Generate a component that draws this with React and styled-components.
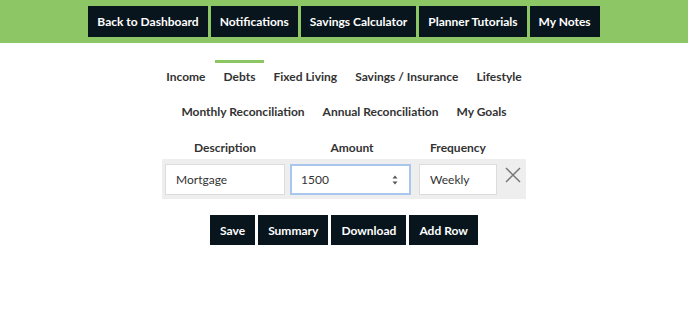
import React from "react";
import styled, { createGlobalStyle } from "styled-components";

const GlobalStyle = createGlobalStyle`
  body {
    margin: 0;
    background: #fff;
    font-family: Lato, "Open Sans", sans-serif;
    color: #333;
  }
`;

const topLinks = ["Back to Dashboard", "Notifications", "Savings Calculator", "Planner Tutorials", "My Notes"];
const tabRows = [
  ["Income", "Debts", "Fixed Living", "Savings / Insurance", "Lifestyle"],
  ["Monthly Reconciliation", "Annual Reconciliation", "My Goals"],
];

const App = () => {
  return (
    <>
      <GlobalStyle />
      <TopBar>
        {topLinks.map((l) => (
          <DarkButton key={l} $h={31} $pad={9}>{l}</DarkButton>
        ))}
      </TopBar>
      <Main>
        <Tabs>
          {tabRows.map((row, i) => (
            <TabRow key={i}>
              {row.map((t) => (
                <Tab key={t} $active={t === "Debts"}>{t}</Tab>
              ))}
            </TabRow>
          ))}
        </Tabs>
        <Table>
          <colgroup>
            <col style={{ width: 126 }} />
            <col style={{ width: 128 }} />
            <col style={{ width: 84 }} />
            <col style={{ width: 26 }} />
          </colgroup>
          <thead>
            <tr>
              <Th>Description</Th>
              <Th>Amount</Th>
              <Th>Frequency</Th>
              <Th />
            </tr>
          </thead>
          <tbody>
            <Row>
              <Td>
                <Field defaultValue="Mortgage" />
              </Td>
              <Td $l={2} $r={5}>
                <NumberBox>
                  <NumberInput defaultValue="1500" />
                  <svg width="8" height="14" viewBox="0 0 8 14">
                    <path d="M1.5 5.5 L4 2.5 L6.5 5.5 Z" fill="#555" />
                    <path d="M1.5 8.5 L4 11.5 L6.5 8.5 Z" fill="#555" />
                  </svg>
                </NumberBox>
              </Td>
              <Td>
                <Field defaultValue="Weekly" />
              </Td>
              <Td $l={0} $r={0}>
                <Remove aria-label="remove row">
                  <svg width="16" height="16" viewBox="0 0 16 16">
                    <path d="M1 1 L15 15 M15 1 L1 15" stroke="#777" strokeWidth="1.5" fill="none" />
                  </svg>
                </Remove>
              </Td>
            </Row>
          </tbody>
        </Table>
        <Actions>
          {["Save", "Summary", "Download", "Add Row"].map((b) => (
            <DarkButton key={b} $h={30} $pad={10}>{b}</DarkButton>
          ))}
        </Actions>
      </Main>
    </>
  );
};

export default App;

const TopBar = styled.div`
  background: #8cc665;
  height: 43px;
  display: flex;
  justify-content: center;
  align-items: flex-start;
  gap: 3px;
  padding-top: 6px;
  box-sizing: border-box;
`;

const DarkButton = styled.button`
  height: ${(p) => p.$h}px;
  padding: 0 ${(p) => p.$pad}px;
  background: #08151d;
  color: #fff;
  border: none;
  font-family: Lato, sans-serif;
  font-weight: 700;
  font-size: 12px;
  cursor: pointer;
  white-space: nowrap;
`;

const Main = styled.div`
  display: flex;
  flex-direction: column;
  align-items: center;
  padding-top: 17px;
`;

const Tabs = styled.div`
  display: flex;
  flex-direction: column;
  align-items: center;
`;

const TabRow = styled.div`
  display: flex;
  height: 35px;
`;

const Tab = styled.div`
  padding: 6px 9px 0;
  height: 35px;
  box-sizing: border-box;
  border-top: 3px solid ${(p) => (p.$active ? "#8cc665" : "transparent")};
  font-size: 12px;
  font-weight: 700;
  color: #333;
  line-height: 16px;
  white-space: nowrap;
`;

const Table = styled.table`
  border-collapse: collapse;
  table-layout: fixed;
  width: 364px;
  margin-top: 5px;
`;

const Th = styled.th`
  font-size: 12px;
  font-weight: 700;
  color: #333;
  height: 24px;
  padding: 0;
  vertical-align: middle;
`;

const Row = styled.tr`
  background: #eeeeee;
`;

const Td = styled.td`
  padding: 5px ${(p) => p.$r ?? 3}px 4px ${(p) => p.$l ?? 3}px;
  vertical-align: top;
`;

const Field = styled.input`
  display: block;
  width: 100%;
  height: 31px;
  box-sizing: border-box;
  border: 1px solid #dcdcdc;
  padding: 0 10px;
  font-family: Lato, sans-serif;
  font-size: 12px;
  color: #333;
  background: #fff;
  outline: none;
`;

const NumberBox = styled.div`
  display: flex;
  align-items: center;
  width: 100%;
  height: 31px;
  box-sizing: border-box;
  border: 2px solid #a9c6ec;
  background: #fff;
  padding: 0 10px 0 9px;
`;

const NumberInput = styled.input`
  flex: 1;
  width: 0;
  min-width: 0;
  border: none;
  outline: none;
  padding: 0;
  font-family: Lato, sans-serif;
  font-size: 12px;
  color: #333;
  background: transparent;
`;

const Remove = styled.button`
  display: flex;
  align-items: center;
  justify-content: center;
  background: none;
  border: none;
  padding: 0;
  width: 26px;
  height: 22px;
  cursor: pointer;
`;

const Actions = styled.div`
  display: flex;
  gap: 3px;
  margin-top: 16px;
`;
